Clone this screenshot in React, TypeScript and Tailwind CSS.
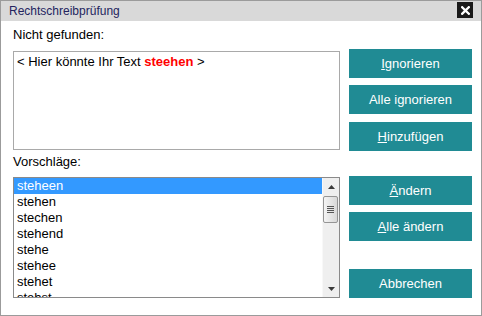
import React from "react";

const items = ["steheen", "stehen", "stechen", "stehend", "stehe", "stehee", "stehet", "stehst"];

function Btn({ children, className = "" }: { children: React.ReactNode; className?: string }) {
  return (
    <div
      className={`h-[29px] w-[123px] bg-[#208b94] text-white text-[13px] leading-[16px] flex items-center justify-center ${className}`}
    >
      <span>{children}</span>
    </div>
  );
}

export default function App() {
  return (
    <div className="w-[482px] h-[316px] border border-[#9b9b9b] bg-white flex flex-col font-['Liberation_Sans',Arial,sans-serif] text-black overflow-hidden">
      <div className="h-[20px] bg-[#d9d9d9] flex items-start justify-between pl-[8px] pr-[8px] shrink-0">
        <span className="text-[12px] leading-[15px] mt-[2.5px] text-[#24245e]">Rechtschreibprüfung</span>
        <div className="w-[16px] h-[16px] bg-[#1a1a1a] mt-[1px] flex items-center justify-center">
          <svg width="9" height="9" viewBox="0 0 9 9">
            <path d="M1.2 1.2L7.8 7.8M7.8 1.2L1.2 7.8" stroke="#fff" strokeWidth="2.3" strokeLinecap="square" />
          </svg>
        </div>
      </div>
      <div className="flex flex-row pl-[12px] pr-[9px]">
        <div className="w-[327px] pt-[6px] flex flex-col">
          <div className="text-[13px] leading-[16px]">Nicht gefunden:</div>
          <div className="mt-[8px] h-[99px] border border-[#a9a9a9] pl-[3px] pt-[2px] text-[13px] leading-[16px]">
            &lt; Hier könnte Ihr Text <span className="font-bold text-[#ff0000]">steehen</span> &gt;
          </div>
          <div className="mt-[4px] text-[13px] leading-[16px]">Vorschläge:</div>
          <div className="mt-[7px] h-[121px] border border-[#8a8a8a] flex flex-row">
            <div className="flex-1 overflow-hidden">
              {items.map((it, i) => (
                <div
                  key={it}
                  className={`h-[16px] leading-[16px] pl-[3px] text-[13px] ${i === 0 ? "bg-[#3399ff] text-white" : ""}`}
                >
                  {it}
                </div>
              ))}
            </div>
            <div className="w-[17px] bg-[#efefef] border-l border-[#f8f8f8] flex flex-col">
              <div className="h-[17px] flex items-center justify-center">
                <svg width="7" height="4" viewBox="0 0 7 4">
                  <path d="M3.5 0L7 4H0Z" fill="#3a3a3a" />
                </svg>
              </div>
              <div className="mt-[1px] ml-[0px] w-[15px] h-[27px] rounded-[2px] border border-[#959595] bg-gradient-to-r from-[#f4f4f4] to-[#d8d8d8] flex flex-col items-center justify-center gap-[1px]">
                <div className="w-[7px] h-[1px] bg-[#555]" />
                <div className="w-[7px] h-[1px] bg-[#555]" />
                <div className="w-[7px] h-[1px] bg-[#555]" />
                <div className="w-[7px] h-[1px] bg-[#555]" />
              </div>
              <div className="flex-1" />
              <div className="h-[17px] flex items-center justify-center">
                <svg width="7" height="4" viewBox="0 0 7 4">
                  <path d="M0 0H7L3.5 4Z" fill="#3a3a3a" />
                </svg>
              </div>
            </div>
          </div>
        </div>
        <div className="w-[123px] ml-[9px] pt-[28px] flex flex-col">
          <Btn>
            <u>I</u>gnorieren
          </Btn>
          <Btn className="mt-[7px]">
            Alle i<u>g</u>norieren
          </Btn>
          <Btn className="mt-[8px]">
            <u>H</u>inzufügen
          </Btn>
          <Btn className="mt-[25px]">
            <u>Ä</u>ndern
          </Btn>
          <Btn className="mt-[7px]">
            <u>A</u>lle ändern
          </Btn>
          <Btn className="mt-[28px]">Abbrechen</Btn>
        </div>
      </div>
    </div>
  );
}
